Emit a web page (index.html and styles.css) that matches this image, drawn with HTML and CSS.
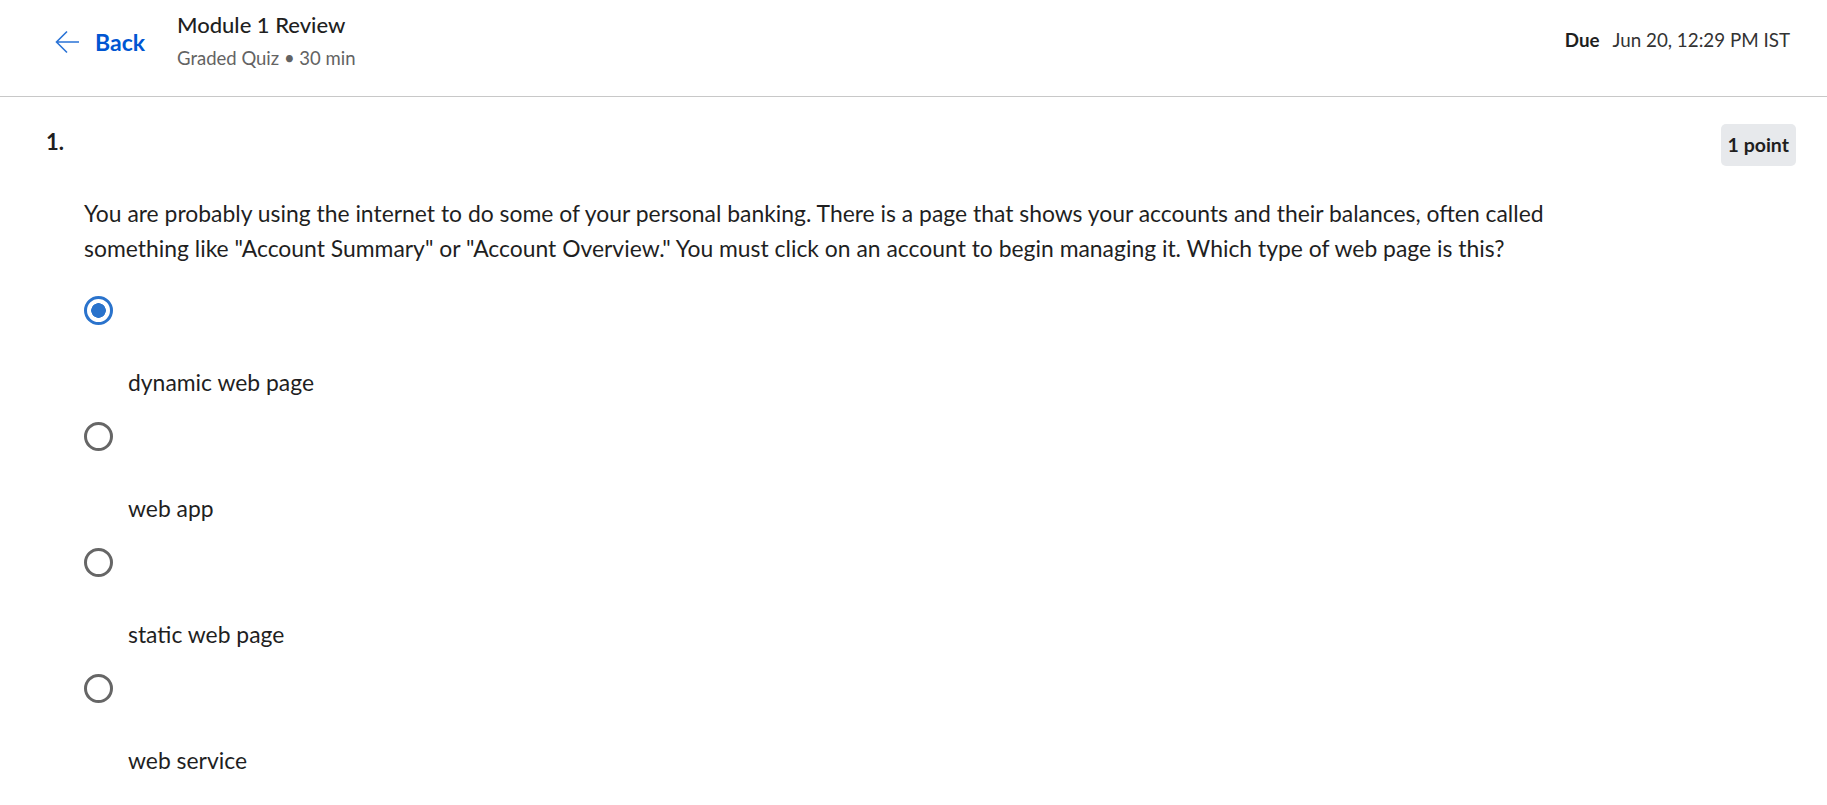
FILE: index.html
```html
<!DOCTYPE html>
<html lang="en">
<head>
<meta charset="utf-8">
<title>Module 1 Review</title>
<link rel="stylesheet" href="styles.css">
</head>
<body>
<header class="topbar">
  <a class="back" href="#">
    <svg class="back-icon" width="25" height="24" viewBox="0 0 25 24" aria-hidden="true">
      <path d="M24 12H2M12 1.5 1.5 12 12 22.5" fill="none" stroke="#2a73d6" stroke-width="1.6"/>
    </svg>
    <span class="back-label">Back</span>
  </a>
  <div class="title-block">
    <div class="title">Module 1 Review</div>
    <div class="subtitle">Graded Quiz • 30 min</div>
  </div>
  <div class="due"><span class="due-label">Due</span><span class="due-date">Jun 20, 12:29 PM IST</span></div>
</header>
<main class="question">
  <div class="q-head">
    <div class="q-num">1.</div>
    <div class="points">1 point</div>
  </div>
  <p class="q-text">You are probably using the internet to do some of your personal banking. There is a page that shows your accounts and their balances, often called something like "Account Summary" or "Account Overview." You must click on an account to begin managing it. Which type of web page is this?</p>
  <div class="options">
    <div class="option">
      <span class="radio checked"></span>
      <div class="opt-label">dynamic web page</div>
    </div>
    <div class="option">
      <span class="radio"></span>
      <div class="opt-label">web app</div>
    </div>
    <div class="option">
      <span class="radio"></span>
      <div class="opt-label">static web page</div>
    </div>
    <div class="option">
      <span class="radio"></span>
      <div class="opt-label">web service</div>
    </div>
  </div>
</main>
</body>
</html>
```
FILE: styles.css
```css
* { box-sizing: border-box; }
html, body { margin: 0; padding: 0; background: #ffffff; }
body {
  font-family: "Lato", "Open Sans", sans-serif;
  color: #1f1f1f;
  overflow: hidden;
}

.topbar {
  display: flex;
  align-items: flex-start;
  height: 97px;
  padding: 0 37px 0 55px;
  border-bottom: 1px solid #c8c8c8;
}

.back {
  display: flex;
  align-items: center;
  gap: 15px;
  margin-top: 27px;
  height: 30px;
  text-decoration: none;
  color: #0056d2;
}
.back-icon { display: block; flex: none; }
.back-label {
  font-size: 23px;
  font-weight: 700;
  line-height: 30px;
}

.title-block {
  margin-left: 32px;
  padding-top: 10px;
}
.title {
  font-size: 22px;
  font-weight: 500;
  line-height: 30px;
  color: #1f1f1f;
}
.subtitle {
  font-size: 18.5px;
  line-height: 37px;
  color: #636363;
}

.due {
  margin-left: auto;
  margin-top: 25px;
  font-size: 18.8px;
  line-height: 30px;
  display: flex;
  gap: 13px;
}
.due-label { font-weight: 700; color: #1f1f1f; }
.due-date { color: #333333; }

.question {
  padding: 27px 31px 0 46px;
}
.q-head {
  display: flex;
  justify-content: space-between;
  align-items: flex-start;
}
.q-num {
  font-size: 22px;
  font-weight: 700;
  line-height: 30px;
  margin-top: 3px;
}
.points {
  height: 42px;
  padding: 0 7px;
  line-height: 42px;
  font-size: 19.5px;
  font-weight: 700;
  background: #e7e9ec;
  border-radius: 5px;
}

.q-text {
  margin: 30px 0 0 38px;
  font-size: 22.9px;
  line-height: 35px;
  max-width: 1490px;
}

.options {
  margin: 30px 0 0 38px;
}
.option {
  padding-bottom: 22px;
}
.radio {
  display: block;
  width: 29px;
  height: 29px;
  border: 3px solid #666666;
  border-radius: 50%;
  margin-bottom: 40px;
}
.radio.checked {
  border-color: #2a73cc;
  background: radial-gradient(circle, #2a73cc 0 7px, #ffffff 7.6px);
}
.opt-label {
  margin-left: 44px;
  font-size: 22.9px;
  line-height: 35px;
}
```
